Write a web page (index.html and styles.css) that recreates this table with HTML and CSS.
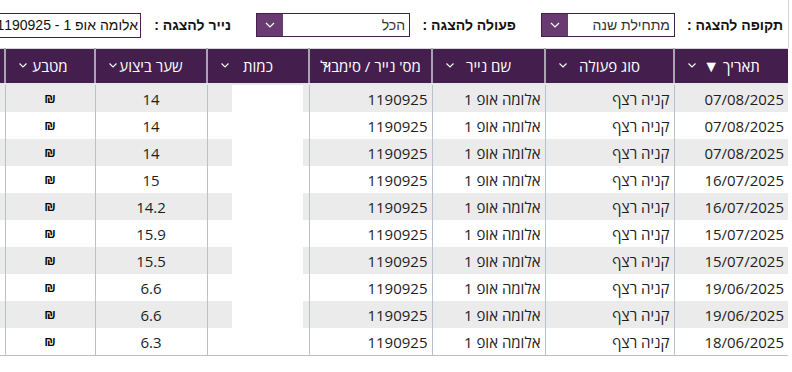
FILE: index.html
```html
<!DOCTYPE html>
<html lang="he" dir="rtl">
<head>
<meta charset="utf-8">
<title>פעולות</title>
<link rel="stylesheet" href="styles.css">
</head>
<body>
<div class="page">
  <div class="filters">
    <label class="flabel flabel-period">תקופה להצגה :</label>
    <div class="select select-period">
      <span class="select-value">מתחילת שנה</span>
      <span class="select-btn"><svg width="10" height="6" viewBox="0 0 10 6"><polyline points="1,1 5,5 9,1" fill="none" stroke="#fff" stroke-width="1.2"/></svg></span>
    </div>
    <label class="flabel flabel-action">פעולה להצגה :</label>
    <div class="select select-action">
      <span class="select-value">הכל</span>
      <span class="select-btn"><svg width="10" height="6" viewBox="0 0 10 6"><polyline points="1,1 5,5 9,1" fill="none" stroke="#fff" stroke-width="1.2"/></svg></span>
    </div>
    <label class="flabel flabel-paper">נייר להצגה :</label>
    <div class="paper-input">אלומה אופ 1 - 1190925</div>
  </div>

  <div class="table-wrap">
    <table class="grid">
      <colgroup>
        <col class="c-date"><col class="c-type"><col class="c-name"><col class="c-num"><col class="c-qty"><col class="c-rate"><col class="c-cur"><col class="c-extra">
      </colgroup>
      <thead>
        <tr>
          <th><span>תאריך <span class="sort">▼</span></span><svg class="chev" width="8" height="5" viewBox="0 0 8 5"><polyline points="0.5,0.5 4,4 7.5,0.5" fill="none" stroke="#fff" stroke-width="1.1"/></svg></th>
          <th><span>סוג פעולה</span><svg class="chev" width="8" height="5" viewBox="0 0 8 5"><polyline points="0.5,0.5 4,4 7.5,0.5" fill="none" stroke="#fff" stroke-width="1.1"/></svg></th>
          <th><span>שם נייר</span><svg class="chev" width="8" height="5" viewBox="0 0 8 5"><polyline points="0.5,0.5 4,4 7.5,0.5" fill="none" stroke="#fff" stroke-width="1.1"/></svg></th>
          <th><span>מס' נייר / סימבול</span><svg class="chev" width="8" height="5" viewBox="0 0 8 5"><polyline points="0.5,0.5 4,4 7.5,0.5" fill="none" stroke="#fff" stroke-width="1.1"/></svg></th>
          <th><span>כמות</span><svg class="chev" width="8" height="5" viewBox="0 0 8 5"><polyline points="0.5,0.5 4,4 7.5,0.5" fill="none" stroke="#fff" stroke-width="1.1"/></svg></th>
          <th><span>שער ביצוע</span><svg class="chev" width="8" height="5" viewBox="0 0 8 5"><polyline points="0.5,0.5 4,4 7.5,0.5" fill="none" stroke="#fff" stroke-width="1.1"/></svg></th>
          <th><span>מטבע</span><svg class="chev" width="8" height="5" viewBox="0 0 8 5"><polyline points="0.5,0.5 4,4 7.5,0.5" fill="none" stroke="#fff" stroke-width="1.1"/></svg></th>
          <th><span>סכום</span></th>
        </tr>
      </thead>
      <tbody>
        <tr><td>07/08/2025</td><td>קניה רצף</td><td>אלומה אופ 1</td><td>1190925</td><td class="qty"><div class="qty-box"></div></td><td class="ctr">14</td><td class="ctr cur">₪</td><td></td></tr>
        <tr><td>07/08/2025</td><td>קניה רצף</td><td>אלומה אופ 1</td><td>1190925</td><td class="qty"><div class="qty-box"></div></td><td class="ctr">14</td><td class="ctr cur">₪</td><td></td></tr>
        <tr><td>07/08/2025</td><td>קניה רצף</td><td>אלומה אופ 1</td><td>1190925</td><td class="qty"><div class="qty-box"></div></td><td class="ctr">14</td><td class="ctr cur">₪</td><td></td></tr>
        <tr><td>16/07/2025</td><td>קניה רצף</td><td>אלומה אופ 1</td><td>1190925</td><td class="qty"><div class="qty-box"></div></td><td class="ctr">15</td><td class="ctr cur">₪</td><td></td></tr>
        <tr><td>16/07/2025</td><td>קניה רצף</td><td>אלומה אופ 1</td><td>1190925</td><td class="qty"><div class="qty-box"></div></td><td class="ctr">14.2</td><td class="ctr cur">₪</td><td></td></tr>
        <tr><td>15/07/2025</td><td>קניה רצף</td><td>אלומה אופ 1</td><td>1190925</td><td class="qty"><div class="qty-box"></div></td><td class="ctr">15.9</td><td class="ctr cur">₪</td><td></td></tr>
        <tr><td>15/07/2025</td><td>קניה רצף</td><td>אלומה אופ 1</td><td>1190925</td><td class="qty"><div class="qty-box"></div></td><td class="ctr">15.5</td><td class="ctr cur">₪</td><td></td></tr>
        <tr><td>19/06/2025</td><td>קניה רצף</td><td>אלומה אופ 1</td><td>1190925</td><td class="qty"><div class="qty-box"></div></td><td class="ctr">6.6</td><td class="ctr cur">₪</td><td></td></tr>
        <tr><td>19/06/2025</td><td>קניה רצף</td><td>אלומה אופ 1</td><td>1190925</td><td class="qty"><div class="qty-box"></div></td><td class="ctr">6.6</td><td class="ctr cur">₪</td><td></td></tr>
        <tr><td>18/06/2025</td><td>קניה רצף</td><td>אלומה אופ 1</td><td>1190925</td><td class="qty"><div class="qty-box"></div></td><td class="ctr">6.3</td><td class="ctr cur">₪</td><td></td></tr>
      </tbody>
    </table>
  </div>
</div>
</body>
</html>
```
FILE: styles.css
```css
html, body {
  margin: 0;
  padding: 0;
  background: #fff;
  overflow: hidden;
}
body {
  font-family: "Open Sans", "Liberation Sans", sans-serif;
  color: #222;
}
.page {
  width: 788px;
  margin-left: 0;
  margin-right: auto;
  direction: rtl;
}
.filters {
  height: 48px;
  display: flex;
  align-items: center;
  padding-right: 5px;
  padding-top: 2px;
  border-right: 1px solid #d4d4d4;
  margin-right: -1px;
  box-sizing: border-box;
  width: 789px;
  white-space: nowrap;
}
.flabel {
  font-family: "Liberation Sans", sans-serif;
  font-weight: bold;
  font-size: 14px;
  color: #111;
  flex: none;
}
.flabel-period { width: 108px; }
.flabel-action { width: 106px; }
.flabel-paper { width: 90px; }
.select {
  flex: none;
  display: flex;
  height: 24px;
  box-sizing: border-box;
  border: 1px solid #45204f;
  background: #fff;
}
.select-period { width: 134px; margin-left: 25px; }
.select-action { width: 154px; margin-left: 25px; }
.select-value {
  flex: 1;
  padding-right: 4px;
  font-family: "Liberation Sans", sans-serif;
  font-size: 14px;
  line-height: 22px;
  color: #333;
}
.select-btn {
  width: 26px;
  background: #6a3a73;
  display: flex;
  align-items: center;
  justify-content: center;
}
.paper-input {
  flex: none;
  width: 170px;
  height: 25px;
  box-sizing: border-box;
  border: 1px solid #45204f;
  padding-right: 2px;
  font-family: "Liberation Sans", sans-serif;
  font-size: 14px;
  line-height: 23px;
  color: #111;
}
.table-wrap {
  width: 788px;
  overflow: hidden;
  direction: rtl;
}
.grid {
  border-collapse: collapse;
  table-layout: fixed;
  width: 883px;
  border-top: 1px solid #d6d6d6;
  border-bottom: 1px solid #b8bfc8;
}
.c-date { width: 114px; }
.c-type { width: 129px; }
.c-name { width: 113px; }
.c-num { width: 123px; }
.c-qty { width: 102px; }
.c-rate { width: 112px; }
.c-cur { width: 90px; }
.c-extra { width: 100px; }
.grid thead th {
  position: relative;
  height: 34px;
  padding: 0;
  background: #441f4e;
  color: #fff;
  font-weight: normal;
  font-size: 15px;
  text-align: center;
  white-space: nowrap;
  overflow: hidden;
  border-left: 2px solid #aaa3b0;
  border-bottom: 2px solid #e6e8ec;
}
.grid thead th .sort {
  font-size: 16px;
}
.grid thead th .chev {
  position: absolute;
  left: 13px;
  top: 14px;
}
.grid tbody td {
  height: 27px;
  padding: 0 4px 0 4px;
  font-size: 15px;
  text-align: right;
  white-space: nowrap;
  overflow: hidden;
  border-left: 1px solid #bac1c9;
  color: #1d1d1d;
}
.grid tbody tr:nth-child(odd) td {
  background: #ebebeb;
}
.grid tbody td.ctr {
  text-align: center;
}
.grid tbody td.cur {
  font-family: "Liberation Sans", "DejaVu Sans", sans-serif;
  font-size: 13px;
  font-weight: bold;
  color: #000;
}
.grid tbody td.qty {
  padding: 0;
  vertical-align: top;
}
.qty-box {
  width: 71px;
  height: 27px;
  margin-right: 6px;
  background: #fff;
}
```
